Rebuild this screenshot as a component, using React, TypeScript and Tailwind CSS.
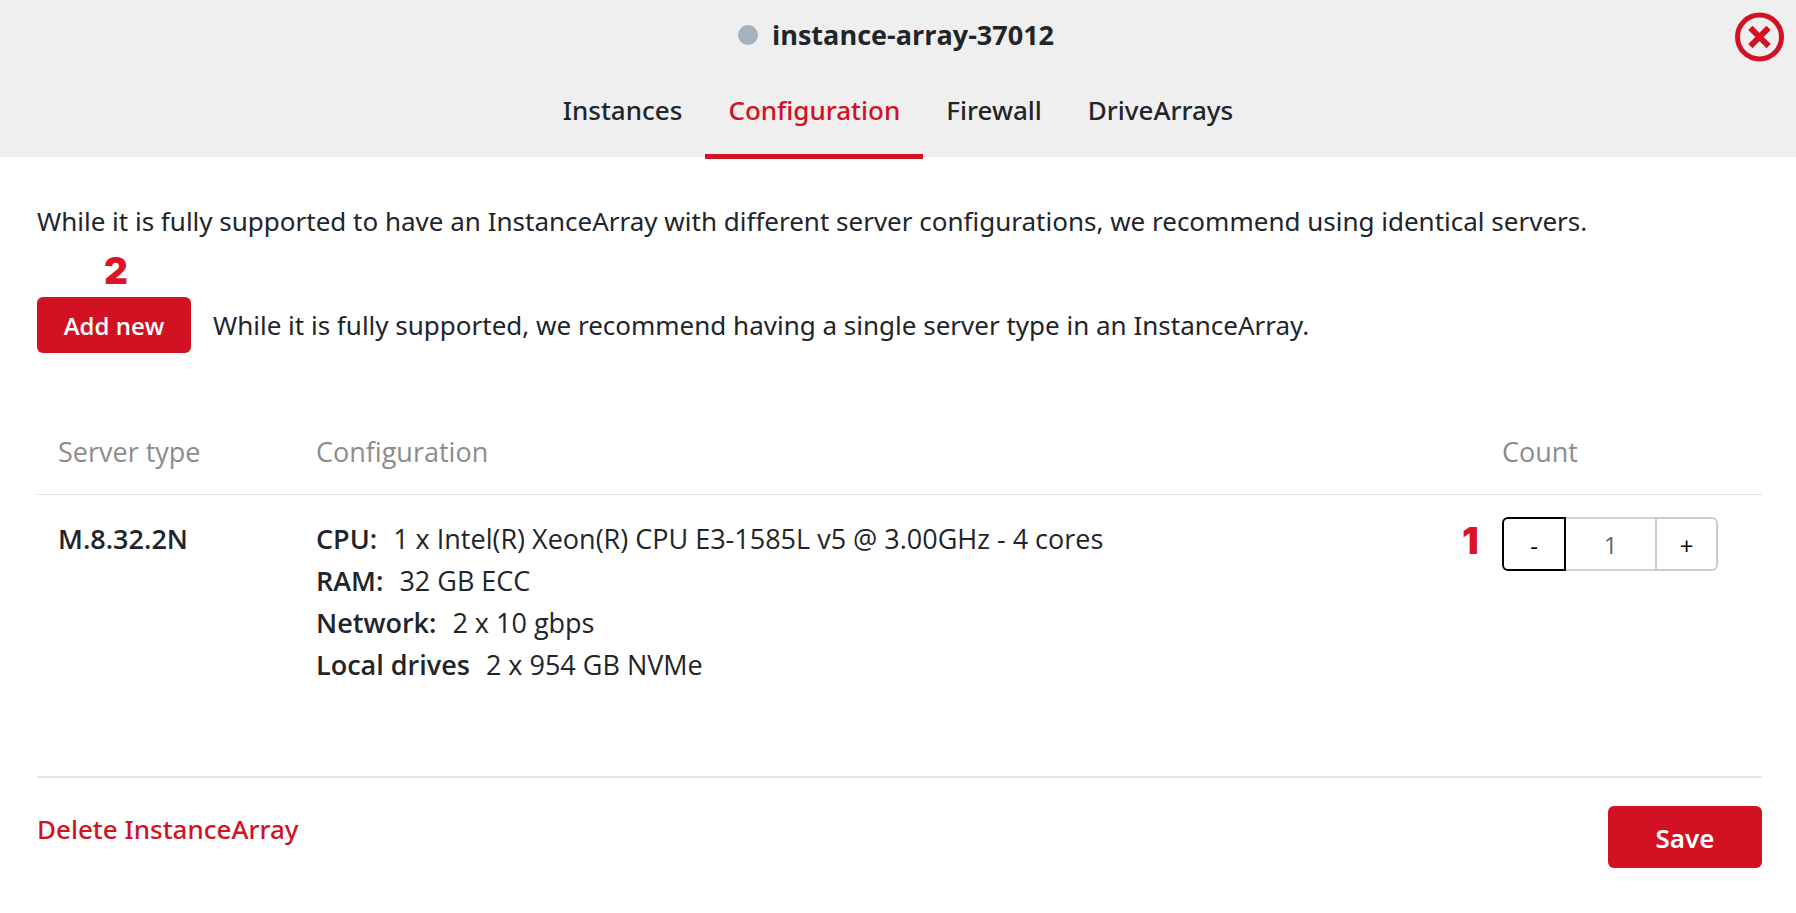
import { useState } from "react";

const tabs = ["Instances", "Configuration", "Firewall", "DriveArrays"];

const specs = [
  { label: "CPU:", value: "1 x Intel(R) Xeon(R) CPU E3-1585L v5 @ 3.00GHz - 4 cores" },
  { label: "RAM:", value: "32 GB ECC" },
  { label: "Network:", value: "2 x 10 gbps" },
  { label: "Local drives", value: "2 x 954 GB NVMe" },
];

function Header({ active, onSelect }: { active: string; onSelect: (tab: string) => void }) {
  return (
    <header className="relative flex h-[157px] flex-col items-center justify-between bg-[#efefef]">
      <div className="flex items-center gap-3.5 pt-4 pr-1">
        <span className="size-5 rounded-full bg-[#a5b3bb]" />
        <h1 className="font-['Open_Sans',sans-serif] text-[27px] leading-[38px] font-bold">instance-array-37012</h1>
      </div>
      <button type="button" aria-label="Close" className="absolute top-3 right-3">
        <svg viewBox="0 0 50 50" className="size-[50px]" fill="none" stroke="#d21222">
          <circle cx="25.5" cy="25" r="22" strokeWidth="5" />
          <path d="M18.5 18 L32.5 32 M32.5 18 L18.5 32" strokeWidth="6" strokeLinecap="square" strokeLinejoin="round" />
        </svg>
      </button>
      <nav className="-mb-0.5 flex">
        {tabs.map((tab) => (
          <button
            key={tab}
            type="button"
            onClick={() => onSelect(tab)}
            className={
              tab === active
                ? "border-b-5 border-[#d21222] px-[23px] pb-[25px] text-[26px] leading-[38px] font-medium text-[#d21222]"
                : "border-b-5 border-transparent px-[23px] pb-[25px] text-[26px] leading-[38px] font-medium"
            }
          >
            {tab}
          </button>
        ))}
      </nav>
    </header>
  );
}

function Stepper() {
  const [count, setCount] = useState(1);
  return (
    <div className="relative flex h-[54px] w-[216px]">
      <span className="absolute top-0.5 -left-10 font-[Inter,sans-serif] text-[37px] leading-[44px] font-black text-[#dc1428]">
        1
      </span>
      <button
        type="button"
        aria-label="Decrease count"
        onClick={() => setCount(Math.max(0, count - 1))}
        className="w-16 rounded-l-md border-2 border-black pt-1 text-2xl text-black"
      >
        -
      </button>
      <input
        aria-label="Count"
        value={count}
        onChange={(e) => setCount(Number(e.target.value) || 0)}
        className="w-[89px] border-y-2 border-[#ced0d4] bg-white pt-0.5 text-center text-2xl text-[#5f666d] outline-none"
      />
      <button
        type="button"
        aria-label="Increase count"
        onClick={() => setCount(count + 1)}
        className="flex-1 rounded-r-md border-2 border-[#cccccc] pt-1 text-2xl text-black"
      >
        +
      </button>
    </div>
  );
}

export default function App() {
  const [active, setActive] = useState("Configuration");
  return (
    <div className="min-h-screen bg-white font-['Noto_Sans','Open_Sans',sans-serif] text-[26px] leading-[42px] text-[#212529]">
      <Header active={active} onSelect={setActive} />
      <main className="pr-[34px] pl-[37px]">
        <p className="pt-[43px]">
          While it is fully supported to have an InstanceArray with different server configurations, we recommend using
          identical servers.
        </p>
        <div className="mt-[55px] flex items-center gap-[22px]">
          <div className="relative shrink-0">
            <span className="absolute bottom-full left-0 w-full pl-1 text-center font-[Inter,sans-serif] text-[37px] leading-[52px] font-black text-[#dc1428]">
              2
            </span>
            <button
              type="button"
              className="h-14 w-[154px] rounded-md bg-[#d21222] pt-0.5 font-['Open_Sans',sans-serif] text-2xl font-semibold text-white"
            >
              Add new
            </button>
          </div>
          <p>While it is fully supported, we recommend having a single server type in an InstanceArray.</p>
        </div>

        <table className="mt-[78px] w-full table-fixed text-left font-['Open_Sans',sans-serif] text-[27px]">
          <colgroup>
            <col className="w-[258px]" />
            <col />
            <col className="w-[281px]" />
          </colgroup>
          <thead>
            <tr className="border-b border-[#dee2e6] text-[#8c8c8c]">
              <th className="pb-[21px] pl-[21px] font-normal">Server type</th>
              <th className="pb-[21px] pl-[21px] font-normal">Configuration</th>
              <th className="pb-[21px] pl-[21px] font-normal">Count</th>
            </tr>
          </thead>
          <tbody>
            <tr className="align-top">
              <td className="pt-[23px] pl-[21px] font-semibold">M.8.32.2N</td>
              <td className="pt-[23px] pl-[21px]">
                <ul>
                  {specs.map((spec) => (
                    <li key={spec.label} className="flex gap-4">
                      <span className="font-semibold">{spec.label}</span>
                      <span>{spec.value}</span>
                    </li>
                  ))}
                </ul>
              </td>
              <td className="pt-[22px] pl-[21px]">
                <Stepper />
              </td>
            </tr>
          </tbody>
        </table>

        <footer className="mt-[90px] flex items-start justify-between border-t-2 border-[#e6e6e6] pt-7">
          <a href="#delete" className="pt-0.5 font-medium text-[#d21222]">
            Delete InstanceArray
          </a>
          <button type="button" className="h-[62px] w-[154px] rounded-md bg-[#d21222] pt-0.5 font-semibold text-white">
            Save
          </button>
        </footer>
      </main>
    </div>
  );
}
